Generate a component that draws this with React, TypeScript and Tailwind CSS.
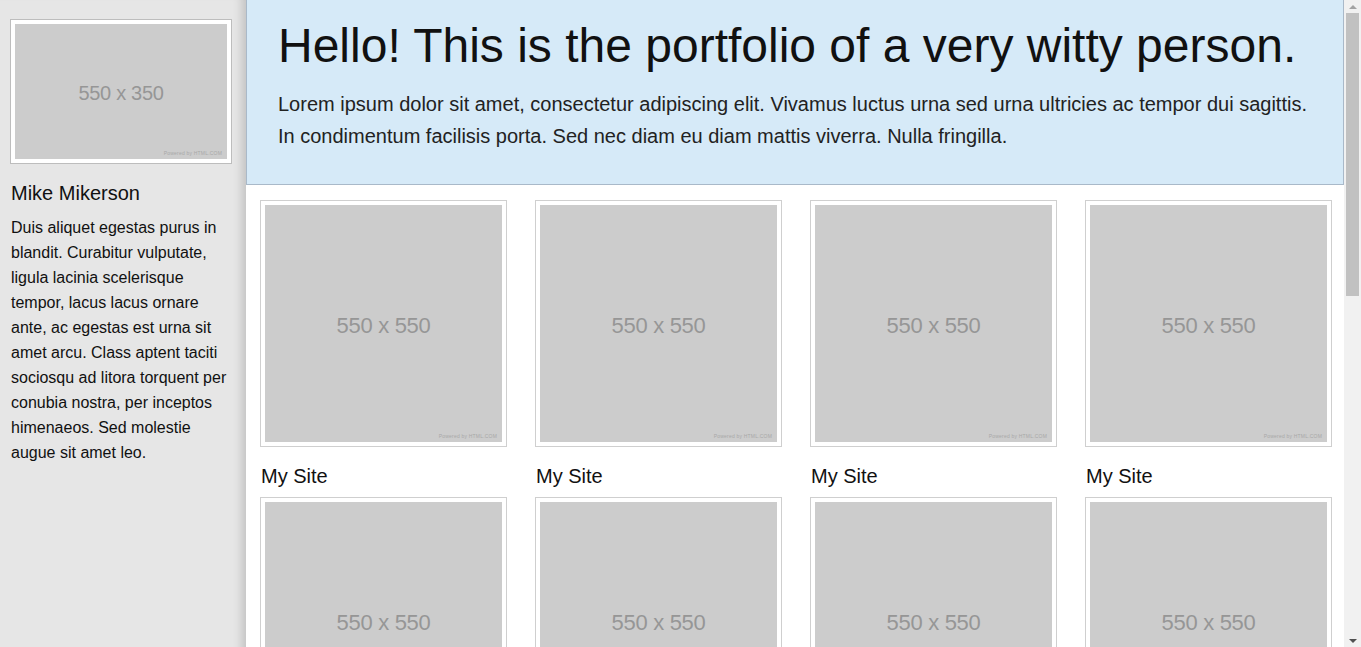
const sites = Array.from({ length: 12 }, (_, i) => i);

function Placeholder({ label, textSize }: { label: string; textSize: string }) {
  return (
    <div className="relative flex items-center justify-center bg-[#cccccc] w-full h-full pt-[3px]">
      <span className={`${textSize} text-[#969696] tracking-[-0.3px]`}>{label}</span>
      <span className="absolute right-[5px] bottom-[3px] text-[5px] leading-none text-[#a8a8a8] tracking-[0.2px]">
        Powered by HTML.COM
      </span>
    </div>
  );
}

function Scrollbar() {
  return (
    <div className="sticky top-0 h-screen w-[17px] shrink-0 bg-[#f1f1f1] flex flex-col items-center">
      <div className="h-[13px] flex items-center justify-center">
        <div className="w-0 h-0 border-x-[4px] border-x-transparent border-b-[4px] border-b-[#a3a3a3]" />
      </div>
      <div className="w-[13px] h-[283px] bg-[#c1c1c1]" />
      <div className="flex-1" />
      <div className="h-[13px] flex items-center justify-center">
        <div className="w-0 h-0 border-x-[4px] border-x-transparent border-t-[4px] border-t-[#505050]" />
      </div>
    </div>
  );
}

export default function App() {
  return (
    <div className="flex min-h-screen bg-white font-['Liberation_Sans',Arial,sans-serif] text-[#111]">
      {/* Sidebar */}
      <aside className="w-[246px] shrink-0 bg-[#e6e6e6] shadow-[inset_-12px_0_10px_-8px_rgba(0,0,0,0.16)] pl-[10px] pr-[14px] pt-[19px]">
        <div className="w-[222px] border border-[#bdbdbd] bg-white p-[4px]">
          <div className="h-[135px]">
            <Placeholder label="550 x 350" textSize="text-[20px]" />
          </div>
        </div>
        <h2 className="mt-[17px] pl-[1px] text-[20px] leading-[24px] text-[#111]">Mike Mikerson</h2>
        <p className="mt-[10px] pl-[1px] text-[16px] leading-[25px] text-[#111]">
          Duis aliquet egestas purus in blandit. Curabitur vulputate, ligula lacinia scelerisque tempor, lacus lacus
          ornare ante, ac egestas est urna sit amet arcu. Class aptent taciti sociosqu ad litora torquent per conubia
          nostra, per inceptos himenaeos. Sed molestie augue sit amet leo.
        </p>
      </aside>

      {/* Main */}
      <main className="flex-1 min-w-0">
        <header className="bg-[#d6eaf8] border-l border-r border-b border-[#a9b9c9] pl-[31px] pr-[30px] pt-[16px] pb-[32px]">
          <h1 className="text-[48px] leading-[60px] text-[#111]">
            Hello! This is the portfolio of a very witty person.
          </h1>
          <p className="mt-[12px] text-[20px] leading-[32px] text-[#222]">
            Lorem ipsum dolor sit amet, consectetur adipiscing elit. Vivamus luctus urna sed urna ultricies ac tempor
            dui sagittis. In condimentum facilisis porta. Sed nec diam eu diam mattis viverra. Nulla fringilla.
          </p>
        </header>

        <section className="grid grid-cols-4 gap-x-[28px] pl-[14px] pr-[12px] pt-[15px]">
          {sites.map((i) => (
            <div key={i} className="flex flex-col">
              <div className="aspect-square border border-[#cfcfcf] bg-white p-[4px]">
                <Placeholder label="550 x 550" textSize="text-[22px]" />
              </div>
              <div className="pl-[1px] pt-[17px] pb-[9px] text-[20px] leading-[24px] text-[#111]">My Site</div>
            </div>
          ))}
        </section>
      </main>

      <Scrollbar />
    </div>
  );
}
